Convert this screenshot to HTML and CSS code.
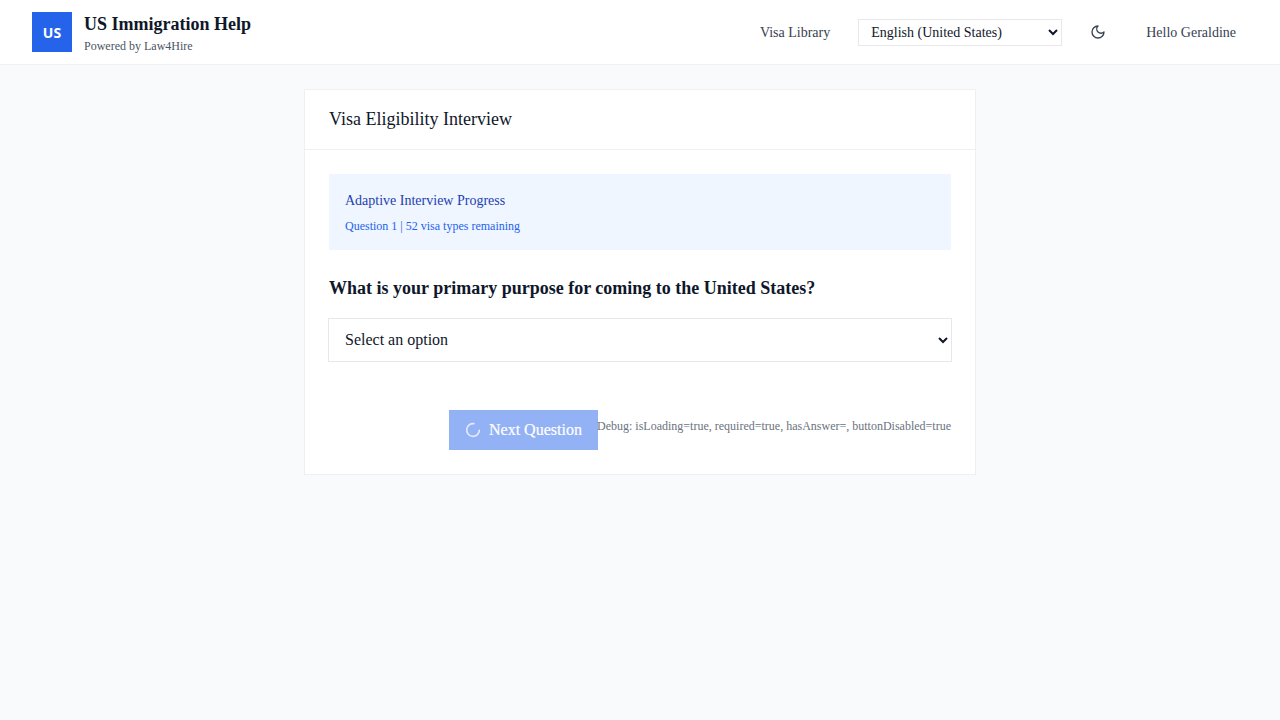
FILE: index.html
```html
<!DOCTYPE html>
<html lang="en">
<head>
<meta charset="utf-8">
<title>US Immigration Help</title>
<link rel="stylesheet" href="styles.css">
</head>
<body>
<header class="header">
  <div class="brand">
    <div class="logo">US</div>
    <div class="brand-text">
      <div class="brand-name">US Immigration Help</div>
      <div class="brand-sub">Powered by Law4Hire</div>
    </div>
  </div>
  <nav class="nav">
    <a class="nav-link">Visa Library</a>
    <select class="language"><option>English (United States)</option></select>
    <button class="theme" aria-label="Toggle theme">
      <svg width="16" height="16" viewBox="0 0 24 24" fill="none" stroke="currentColor" stroke-width="2" stroke-linecap="round" stroke-linejoin="round"><path d="M12 3a6 6 0 0 0 9 9 9 9 0 1 1-9-9Z"/></svg>
    </button>
    <span class="greeting">Hello Geraldine</span>
  </nav>
</header>
<main class="card">
  <h1 class="card-title">Visa Eligibility Interview</h1>
  <div class="card-body">
    <div class="progress">
      <div class="progress-title">Adaptive Interview Progress</div>
      <div class="progress-text">Question 1 | 52 visa types remaining</div>
    </div>
    <h2 class="question">What is your primary purpose for coming to the United States?</h2>
    <select class="answer"><option>Select an option</option></select>
    <div class="actions">
      <button class="next" disabled>
        <svg class="spinner" width="16" height="16" viewBox="0 0 24 24" fill="none" stroke="currentColor" stroke-width="2.4" stroke-linecap="round"><path d="M21.5 12.5A9.5 9.5 0 1 1 13.5 2.6"/></svg>
        <span>Next Question</span>
      </button>
      <div class="debug">Debug: isLoading=true, required=true, hasAnswer=, buttonDisabled=true</div>
    </div>
  </div>
</main>
</body>
</html>
```
FILE: styles.css
```css
* { box-sizing: border-box; }
body { margin: 0; min-height: 720px; background: #f9fafb; color: #0f172a; font-family: "Liberation Serif", "Times New Roman", serif; font-size: 16px; line-height: 24px; }
h1, h2 { margin: 0; }
select, button { font-family: inherit; border-radius: 0; }
.header { height: 65px; padding: 0 32px; display: flex; align-items: center; justify-content: space-between; background: #fff; border-bottom: 1px solid #f0f0f2; }
.brand { display: flex; gap: 12px; align-items: center; }
.logo { width: 40px; height: 40px; padding-top: 1px; display: flex; align-items: center; justify-content: center; background: #2563eb; color: #fff; font: bold 14px "Noto Sans", sans-serif; }
.brand-name { font-size: 18px; font-weight: bold; line-height: 26px; }
.brand-sub { padding-top: 1px; font-size: 12px; line-height: 16px; color: #4b5563; }
.nav { display: flex; align-items: center; font-size: 14px; line-height: 20px; color: #374151; }
.nav-link { padding-top: 2px; }
.language { width: 204px; height: 27px; margin-left: 28px; padding: 0 0 0 8px; border: 1px solid #e8e8ea; background: #fff; color: #0f172a; font-size: 14px; }
.theme { width: 32px; height: 32px; margin-left: 20px; padding: 8px; border: 0; background: none; color: #374151; }
.theme svg { display: block; }
.greeting { padding: 2px 12px 0; margin-left: 20px; }
.card { width: 672px; margin: 24px auto 0; background: #fff; border: 1px solid #f0f0f2; }
.card-title { height: 60px; padding: 0 24px; font-size: 18px; font-weight: normal; line-height: 59px; border-bottom: 1px solid #f0f0f2; }
.card-body { padding: 24px; }
.progress { height: 76px; padding: 17px 16px 15px; background: #eff6ff; }
.progress-title { margin-bottom: 7px; font-size: 14px; line-height: 20px; color: #1e40af; }
.progress-text { font-size: 12px; line-height: 16px; color: #2563eb; }
.question { margin: 24px 0 16px; font-size: 18px; line-height: 28px; }
.answer { display: block; width: 624px; height: 44px; margin-left: -1px; padding: 0 0 1px 12px; border: 1px solid #e5e7eb; background: #fff; color: #0f172a; font-size: 16px; }
.actions { display: flex; justify-content: flex-end; margin-top: 48px; }
.next { width: 149px; height: 40px; margin-right: -1px; padding: 0 16px; display: flex; align-items: center; gap: 8px; border: 0; background: #93b1f5; color: #fff; font-size: 16px; white-space: nowrap; -webkit-text-stroke: .2px #fff; }
.spinner { flex: none; opacity: .75; }
.debug { padding-top: 8px; font-size: 12px; line-height: 16px; color: #6b7280; white-space: nowrap; position: relative; }
```
